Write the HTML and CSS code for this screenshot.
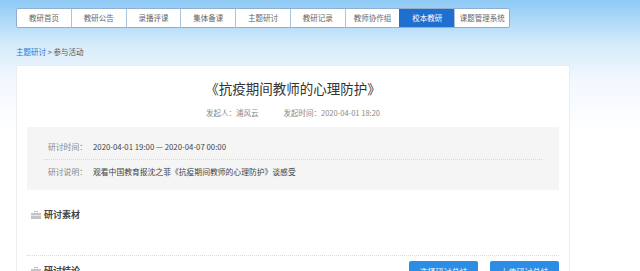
FILE: index.html
```html
<!DOCTYPE html>
<html lang="zh-CN">
<head>
  <meta charset="UTF-8" />
  <title>参与活动</title>
  <link rel="stylesheet" href="styles.css">
</head>
<body>
  <div class="page">
    <ul class="nav">
      <li>教研首页</li>
      <li>教研公告</li>
      <li>录播评课</li>
      <li>集体备课</li>
      <li>主题研讨</li>
      <li>教研记录</li>
      <li>教师协作组</li>
      <li class="active">校本教研</li>
      <li>课题管理系统</li>
    </ul>

    <div class="crumb"><a href="#">主题研讨</a> &gt; 参与活动</div>

    <div class="card">
      <h1>《抗疫期间教师的心理防护》</h1>
      <div class="meta">
        <span>发起人：浦风云</span>
        <span>发起时间：2020-04-01 18:20</span>
      </div>

      <div class="info">
        <div class="row">
          <span class="label">研讨时间：</span>
          <span>2020-04-01 19:00 — 2020-04-07 00:00</span>
        </div>
        <div class="row">
          <span class="label">研讨说明：</span>
          <span>观看中国教育报沈之菲《抗疫期间教师的心理防护》谈感受</span>
        </div>
      </div>

      <div class="section">
        <div class="section-head">
          <svg class="ico" viewBox="0 0 10 8" width="10" height="8"><path d="M3 0h4v1.5H6V1H4v.5H3z M0 2h10v6H0z" fill="#c4c4c4"/><rect x="0" y="4" width="10" height="0.8" fill="#eee"/></svg>
          <span>研讨素材</span>
        </div>
      </div>

      <div class="section last">
        <div class="section-head">
          <svg class="ico" viewBox="0 0 10 8" width="10" height="8"><path d="M3 0h4v1.5H6V1H4v.5H3z M0 2h10v6H0z" fill="#c4c4c4"/><rect x="0" y="4" width="10" height="0.8" fill="#eee"/></svg>
          <span>研讨结论</span>
          <div class="btns">
            <button>选择研讨总结</button>
            <button>上传研讨总结</button>
          </div>
        </div>
      </div>
    </div>
  </div>
</body>
</html>
```

FILE: styles.css
```css
body {
  margin: 0;
  font-family: "Noto Sans CJK SC", "Noto Sans", sans-serif;
  background: linear-gradient(to bottom, #8ecaf5 0, #d6ebfb 45px, #f2f8fe 80px, #fff 130px);
  color: #333;
  min-height: 100vh;
}

.page {
  padding: 8px 0 0 16px;
  width: 554px;
}

.nav {
  display: flex;
  margin: 0;
  padding: 0;
  list-style: none;
  width: 494px;
  border: 1px solid #8fb0d2;
  border-radius: 2px;
  background: #fff;
  box-sizing: border-box;
}

.nav li {
  flex: 1;
  height: 18px;
  line-height: 18px;
  text-align: center;
  font-size: 7.5px;
  color: #666;
  border-left: 1px solid #a9c3dc;
}

.nav li:first-child {
  border-left: none;
}

.nav li.active {
  background: #1f6fce;
  color: #fff;
  border-left-color: #1f6fce;
}

.crumb {
  margin-top: 18px;
  font-size: 7.5px;
  line-height: 12px;
  color: #555;
}

.crumb a {
  color: #2a7ad2;
  text-decoration: none;
}

.card {
  margin-top: 7px;
  background: #fff;
  border: 1px solid #ececec;
  padding: 13px 10px 0 10px;
}

h1 {
  margin: 0;
  font-size: 13.5px;
  font-weight: normal;
  line-height: 18px;
  text-align: center;
  color: #333;
}

.meta {
  margin-top: 10px;
  font-size: 7.5px;
  line-height: 12px;
  color: #888;
  display: flex;
  justify-content: center;
  gap: 25px;
}

.info {
  margin-top: 8px;
  background: #f5f5f5;
  padding: 8px 17px 6px;
}

.row {
  display: flex;
  padding: 6px 4px;
  font-size: 7.8px;
  line-height: 12px;
  color: #444;
}

.row:first-child {
  border-bottom: 1px dotted #d8d8d8;
}

.label {
  width: 45px;
  color: #888;
}

.section {
  margin-top: 18px;
  height: 47px;
}

.section.last {
  margin-top: 0;
  border-top: 1px dotted #dcdcdc;
  padding-top: 5px;
  height: auto;
}

.section-head {
  display: flex;
  align-items: center;
  padding-left: 4px;
  font-size: 9px;
  font-weight: bold;
  line-height: 14px;
  color: #444;
}

.section.last .section-head {
  align-items: flex-start;
  line-height: 20px;
}

.ico {
  margin-right: 3px;
}

.section.last .ico {
  margin-top: 6px;
}

.btns {
  margin-left: auto;
  display: flex;
  gap: 12px;
}

button {
  width: 69px;
  height: 20px;
  border: none;
  border-radius: 2px;
  background: #2b8de5;
  color: #fff;
  font-family: inherit;
  font-size: 8px;
  font-weight: normal;
  padding: 0;
}
```
